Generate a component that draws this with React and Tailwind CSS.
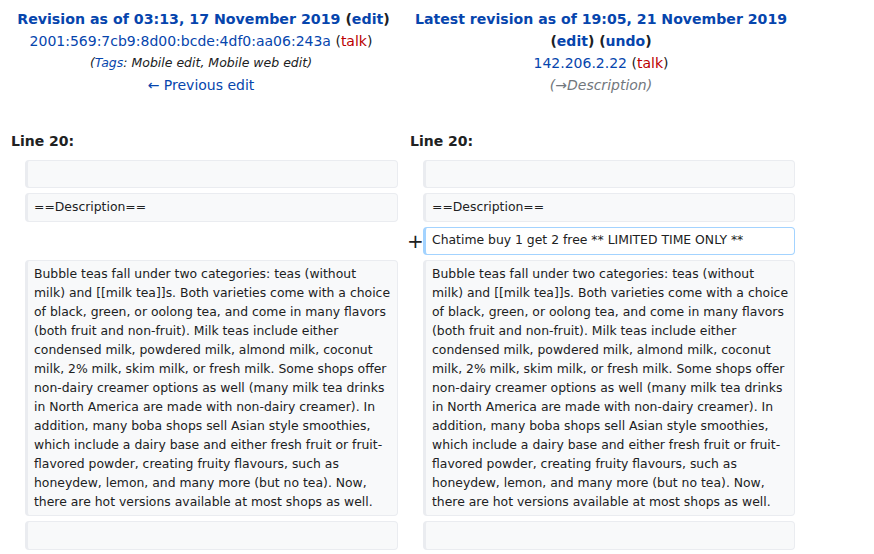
import React from "react";

const bodyLines = [
  "Bubble teas fall under two categories: teas (without",
  "milk) and [[milk tea]]s. Both varieties come with a choice",
  "of black, green, or oolong tea, and come in many flavors",
  "(both fruit and non-fruit). Milk teas include either",
  "condensed milk, powdered milk, almond milk, coconut",
  "milk, 2% milk, skim milk, or fresh milk. Some shops offer",
  "non-dairy creamer options as well (many milk tea drinks",
  "in North America are made with non-dairy creamer). In",
  "addition, many boba shops sell Asian style smoothies,",
  "which include a dairy base and either fresh fruit or fruit-",
  "flavored powder, creating fruity flavours, such as",
  "honeydew, lemon, and many more (but no tea). Now,",
  "there are hot versions available at most shops as well.",
];

const Box = ({ children, added = false, w }) => (
  <div
    className={`${w} rounded-[4px] border border-l-[3px] px-[6px] pt-[2.67px] pb-[4.67px] text-[12.4px] leading-[19px] text-[#202122] ${
      added ? "bg-white border-[#a3d3ff]" : "bg-[#f8f9fa] border-[#eaecf0]"
    }`}
  >
    {children || <br />}
  </div>
);

const Row = ({ left, right, added = false }) => (
  <div className="flex">
    <div className="flex w-[400px]">
      <div className="w-[25px]" />
      {left === null ? <div className="w-[373px]" /> : <Box w="w-[373px]">{left}</Box>}
    </div>
    <div className="flex">
      <div className="w-[23px] flex items-center justify-start pl-[7px] text-[20px] leading-none text-[#202122]">
        {added ? "+" : ""}
      </div>
      <Box w="w-[372px]" added={added}>
        {right}
      </Box>
    </div>
  </div>
);

const Lines = () => (
  <>
    {bodyLines.map((l, i) => (
      <div key={i} className="whitespace-nowrap">
        {l}
      </div>
    ))}
  </>
);

export default function App() {
  return (
    <div
      className="w-[874px] h-[554px] bg-white overflow-hidden text-[#202122]"
      style={{ fontFamily: '"DejaVu Sans", sans-serif' }}
    >
      <div className="flex pt-[8px] text-[14px] leading-[22px]">
        <div className="w-[402px] text-center">
          <div className="font-bold pl-[5px] text-[14.2px] text-[#0645ad]">
            Revision as of 03:13, 17 November 2019{" "}
            <span className="text-[#202122]">
              (<span className="text-[#0645ad]">edit</span>)
            </span>
          </div>
          <div>
            <span className="text-[#0645ad]">2001:569:7cb9:8d00:bcde:4df0:aa06:243a</span>{" "}
            (<span className="text-[#ba0000]">talk</span>)
          </div>
          <div className="italic text-[12.5px] text-[#202122]">
            (<span className="text-[#0645ad]">Tags</span>: Mobile edit, Mobile web edit)
          </div>
          <div className="text-[#0645ad]">← Previous edit</div>
        </div>
        <div className="w-[398px] text-center">
          <div className="font-bold text-[14.1px] text-[#0645ad]">
            Latest revision as of 19:05, 21 November 2019
          </div>
          <div className="font-bold text-[#202122]">
            (<span className="text-[#0645ad]">edit</span>) (
            <span className="text-[#0645ad]">undo</span>)
          </div>
          <div>
            <span className="text-[#0645ad]">142.206.2.22</span>{" "}
            (<span className="text-[#ba0000]">talk</span>)
          </div>
          <div className="italic text-[#72777d]">(→Description)</div>
        </div>
      </div>

      <div className="flex mt-[34px] text-[14px] font-bold leading-[22px]">
        <div className="w-[400px] pl-[11px]">Line 20:</div>
        <div className="pl-[10px]">Line 20:</div>
      </div>

      <div className="mt-[8px] flex flex-col gap-[5px]">
        <Row left="" right="" />
        <Row left="==Description==" right="==Description==" />
        <Row left={null} right="Chatime buy 1 get 2 free ** LIMITED TIME ONLY **" added />
        <Row left={<Lines />} right={<Lines />} />
        <Row left="" right="" />
      </div>
    </div>
  );
}
